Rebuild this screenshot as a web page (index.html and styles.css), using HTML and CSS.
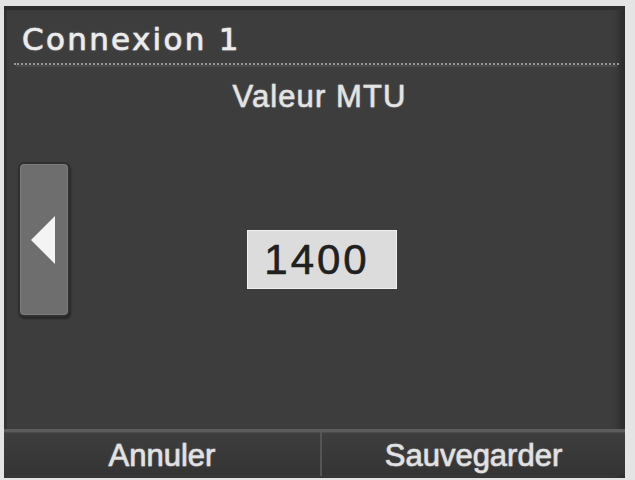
FILE: index.html
```html
<!DOCTYPE html>
<html lang="fr">
<head>
<meta charset="utf-8">
<title>Connexion 1</title>
<link rel="stylesheet" href="styles.css">
</head>
<body>
<div class="screen">
  <div class="header"><span class="title">Connexion 1</span></div>
  <div class="subtitle">Valeur MTU</div>
  <div class="main">
    <div class="arrow-btn">
      <svg width="26" height="50" viewBox="0 0 26 50"><polygon points="1,25 25,1 25,49" fill="#f4f4f4"/></svg>
    </div>
    <div class="value">1400</div>
  </div>
  <div class="footer">
    <div class="fbtn fbtn-left">Annuler</div>
    <div class="fbtn">Sauvegarder</div>
  </div>
</div>
</body>
</html>
```

FILE: styles.css
```css
html, body {
  margin: 0;
  padding: 0;
}
body {
  background: #e4e4e4;
  width: 635px;
  height: 480px;
  overflow: hidden;
}
.screen {
  margin: 6px 10px 0 4px;
  width: 621px;
  height: 472px;
  background: #3d3d3d;
  display: flex;
  flex-direction: column;
  box-shadow: inset 0 4px 0 #2e2e2e, inset 3px 0 0 #333, inset -6px 0 6px #2c2c2c;
  font-family: "Liberation Sans", Arial, sans-serif;
  color: #e4e4e4;
}
.header {
  padding: 15px 0 6px 18px;
  margin: 0 6px 0 10px;
  border-bottom: 2px dotted #9a9a9a;
  box-shadow: 0 4px 0 -2px #4a4a4a;
}
.title {
  font-family: "DejaVu Sans", Verdana, sans-serif;
  font-size: 31px;
  line-height: 36px;
  letter-spacing: 2.3px;
  margin-left: -10px;
  color: #ececec;
  -webkit-text-stroke: 0.6px #ececec;
  text-shadow: 0 0 2px rgba(255,255,255,0.5);
}
.subtitle {
  margin-top: 14px;
  font-size: 31px;
  line-height: 36px;
  text-align: center;
  letter-spacing: 1.1px;
  padding-left: 10px;
  -webkit-text-stroke: 0.5px #e4e4e4;
  text-shadow: 0 0 2px rgba(255,255,255,0.4);
}
.main {
  height: 314px;
  display: flex;
  align-items: flex-start;
  padding-left: 14px;
}
.arrow-btn {
  margin-top: 47px;
  height: 151px;
  width: 38px;
  padding-left: 10px;
  box-sizing: content-box;
  background: #6e6e6e;
  border: 2px solid #2f2f2f;
  border-radius: 6px;
  box-shadow: inset 0 0 0 1px #7c7c7c, 1px 2px 2px rgba(0,0,0,0.4);
  display: flex;
  align-items: center;
}
.arrow-btn svg {
  display: block;
}
.value {
  margin-top: 115px;
  margin-left: 177px;
  width: 150px;
  height: 59px;
  box-sizing: border-box;
  background: #dcdcdc;
  border: 1px solid #f0f0f0;
  color: #202020;
  font-size: 42px;
  line-height: 57px;
  letter-spacing: 3px;
  text-align: center;
  padding-right: 10px;
  -webkit-text-stroke: 0.6px #202020;
}
.footer {
  height: 43px;
  display: grid;
  grid-template-columns: 318px 1fr;
  background: linear-gradient(#3e3e3e, #343434);
  border-top: 3px solid #5c5c5c;
  box-shadow: inset 0 1px 0 #4a4a4a;
}
.fbtn {
  font-size: 31px;
  line-height: 40px;
  padding-top: 4px;
  text-align: center;
  color: #e2e2e2;
  -webkit-text-stroke: 0.6px #e2e2e2;
  text-shadow: 0 0 2px rgba(255,255,255,0.4);
}
.fbtn-left {
  border-right: 2px solid #555;
}
```
